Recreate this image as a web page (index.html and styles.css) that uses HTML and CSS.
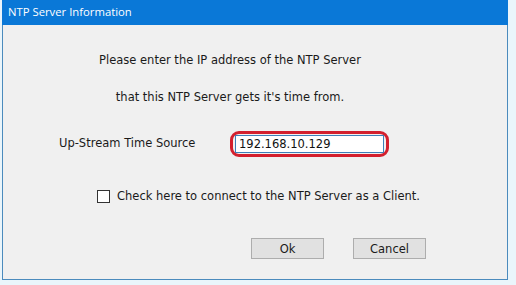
FILE: index.html
```html
<!DOCTYPE html>
<html lang="en">
<head>
  <meta charset="UTF-8" />
  <title>NTP Server Information</title>
  <link rel="stylesheet" href="styles.css">
</head>
<body>

<div class="dialog">
  <div class="titlebar">NTP Server Information</div>
  <div class="panel">
    <p class="msg first">Please enter the IP address of the NTP Server</p>
    <p class="msg">that this NTP Server gets it's time from.</p>

    <div class="row">
      <label class="lbl" for="upstream">Up-Stream Time Source</label>
      <div class="mark">
        <input type="text" id="upstream" value="192.168.10.129" />
      </div>
    </div>

    <div class="check">
      <span class="box"></span>
      <span>Check here to connect to the NTP Server as a Client.</span>
    </div>

    <div class="buttons">
      <button class="btn">Ok</button>
      <button class="btn">Cancel</button>
    </div>
  </div>
</div>

</body>
</html>
```

FILE: styles.css
```css
body {
  margin: 0;
  background: #eaf5fb;
  font-family: "DejaVu Sans", Verdana, sans-serif;
  font-size: 11.5px;
  color: #1a1a1a;
}
.dialog {
  width: 506px;
  margin-left: 2px;
}
.titlebar {
  height: 25px;
  line-height: 24px;
  background: #0a78d7;
  color: #fff;
  font-family: "Open Sans", "Segoe UI", sans-serif;
  font-size: 11.3px;
  padding-left: 6px;
}
.panel {
  height: 254px;
  background: #f0f0f0;
  border: 1px solid #4b8bbd;
  border-top: none;
  display: flex;
  flex-direction: column;
}
.msg {
  margin: 0;
  width: 454px;
  text-align: center;
  line-height: 14px;
}
.msg.first {
  margin-top: 28px;
}
.msg + .msg {
  margin-top: 23px;
}
.row {
  display: flex;
  align-items: center;
  margin-top: 27px;
  padding-left: 56px;
  line-height: 14px;
}
.lbl {
  width: 171px;
  margin-top: -2px;
}
.mark {
  border: 3px solid #d3202e;
  border-radius: 9px;
  padding: 1px 2px;
}
#upstream {
  display: block;
  width: 149px;
  height: 18px;
  box-sizing: border-box;
  border: 1px solid #3d7fb8;
  background: #fff;
  font-family: "DejaVu Sans", Verdana, sans-serif;
  font-size: 11.5px;
  color: #111;
  padding: 0 3px;
  outline: none;
}
.check {
  display: flex;
  align-items: center;
  gap: 7px;
  margin-top: 32px;
  padding-left: 94px;
  line-height: 14px;
}
.box {
  width: 11px;
  height: 11px;
  border: 1px solid #333;
  background: #fff;
}
.buttons {
  display: flex;
  gap: 29px;
  margin-top: 35px;
  padding-left: 248px;
}
.btn {
  width: 73px;
  height: 21px;
  background: #e1e1e1;
  border: 1px solid #adadad;
  font-family: "DejaVu Sans", Verdana, sans-serif;
  font-size: 11.5px;
  color: #1a1a1a;
  padding: 0;
}
```
